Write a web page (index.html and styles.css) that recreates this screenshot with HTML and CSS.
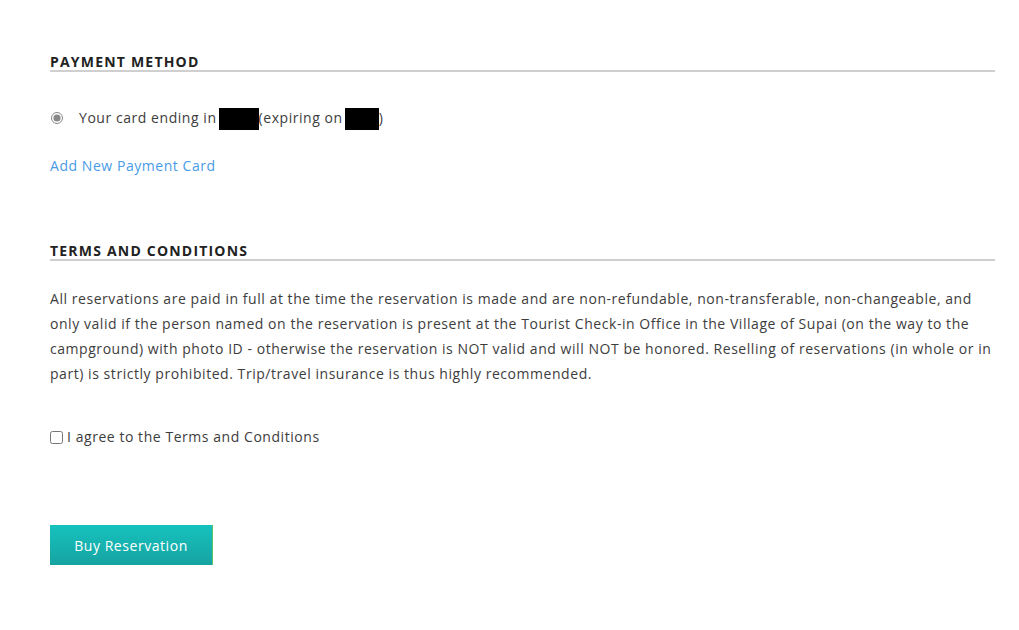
FILE: index.html
```html
<!DOCTYPE html>
<html lang="en">
<head>
  <meta charset="UTF-8" />
  <title>Checkout</title>
  <link rel="stylesheet" href="styles.css">
</head>
<body>
  <main class="checkout">

    <section class="payment">
      <h2 class="section-title">Payment Method</h2>
      <label class="card-row">
        <input type="radio" name="card" checked>
        <span>Your card ending in<span class="masked"></span>(expiring on<span class="masked short"></span>)</span>
      </label>
      <a href="#" class="add-card">Add New Payment Card</a>
    </section>

    <section class="terms">
      <h2 class="section-title">Terms and Conditions</h2>
      <p>All reservations are paid in full at the time the reservation is made and are non-refundable, non-transferable, non-changeable, and only valid if the person named on the reservation is present at the Tourist Check-in Office in the Village of Supai (on the way to the campground) with photo ID - otherwise the reservation is NOT valid and will NOT be honored. Reselling of reservations (in whole or in part) is strictly prohibited. Trip/travel insurance is thus highly recommended.</p>
      <label class="agree">
        <input type="checkbox">
        <span>I agree to the Terms and Conditions</span>
      </label>
    </section>

    <button class="buy-btn">Buy Reservation</button>

  </main>
</body>
</html>
```

FILE: styles.css
```css
body {
  margin: 0;
  font-family: 'Open Sans', sans-serif;
  font-size: 14px;
  letter-spacing: 0.55px;
  color: #3d3d3d;
  background: #fff;
}

.checkout {
  width: 945px;
  padding: 0 0 60px 50px;
}

.section-title {
  margin: 0;
  font-size: 14px;
  line-height: 16px;
  font-weight: 700;
  letter-spacing: 1.2px;
  text-transform: uppercase;
  color: #222;
  border-bottom: 2px solid #cfcfcf;
}

.payment .section-title {
  margin-top: 54px;
}

.card-row {
  display: flex;
  align-items: center;
  margin-top: 34px;
  line-height: 24px;
}

.card-row input {
  margin: 0 16px 0 1px;
  width: 12px;
  height: 12px;
  accent-color: #888;
}

.masked {
  display: inline-block;
  width: 40px;
  height: 22px;
  margin-left: 2px;
  background: #000;
  vertical-align: middle;
}

.masked.short {
  width: 34px;
}

.add-card {
  display: block;
  margin-top: 24px;
  line-height: 24px;
  color: #4a9be6;
  text-decoration: none;
}

.terms .section-title {
  margin-top: 65px;
}

.terms p {
  margin: 25px 0 0;
  line-height: 25px;
}

.agree {
  display: flex;
  align-items: center;
  margin-top: 39px;
  line-height: 24px;
}

.agree input {
  margin: 0 4px 0 0;
  width: 13px;
  height: 13px;
}

.buy-btn {
  margin-top: 76px;
  width: 163px;
  height: 40px;
  border: none;
  border-right: 1px solid #5cc26a;
  background: linear-gradient(#16c2be, #16a3a1);
  color: #fff;
  font-family: 'Open Sans', sans-serif;
  font-size: 14px;
  letter-spacing: 0.55px;
  cursor: pointer;
}
```
